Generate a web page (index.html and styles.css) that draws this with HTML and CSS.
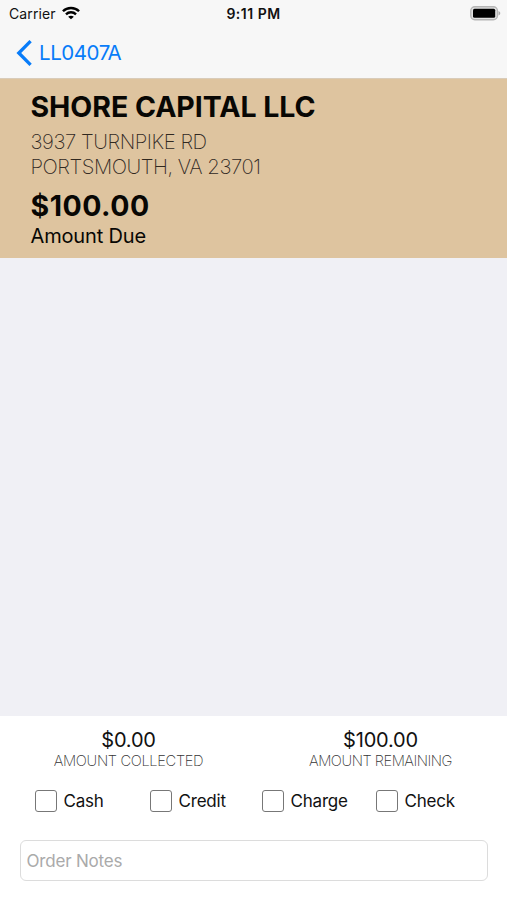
FILE: index.html
```html
<!DOCTYPE html>
<html lang="en">
<head>
<meta charset="utf-8">
<title>LL0407A</title>
<link rel="stylesheet" href="styles.css">
</head>
<body>
<div class="screen">
  <header class="top">
    <div class="status">
      <div class="carrier"><span>Carrier</span>
        <svg class="wifi" width="18" height="14" viewBox="0 0 19 14" fill="none" stroke="#000" stroke-width="2.5"><path d="M1 5.200C5.500 .5 13.500 .5 18 5.200M4.200 8.400c2.900-2.900 7.700-2.900 10.600 0"/><path d="M9.500 13.700 6.500 10.900c1.600-1.500 4.400-1.500 6 0z" fill="#000" stroke="none"/></svg>
      </div>
      <span class="time">9:11 PM</span>
      <svg class="battery" width="31" height="15" viewBox="0 0 31 15"><rect x=".8" y=".8" width="26.600" height="13" rx="4" fill="#e2e2e2" stroke="#b5b5b5" stroke-width="1.400"/><rect x="3" y="2.800" width="22.200" height="9" rx="1.500" fill="#000"/><path d="M28.500 5v4.500c2.300-.8 2.300-3.700 0-4.500z" fill="#aaa"/></svg>
    </div>
    <nav class="nav">
      <svg width="16" height="26" viewBox="0 0 16 26" fill="none" stroke="#087cf9" stroke-width="3.300"><path d="M14.600 1.200 2.800 13l11.800 11.800"/></svg>
      <span class="back">LL0407A</span>
    </nav>
  </header>
  <section class="account">
    <h1 class="name">SHORE CAPITAL LLC</h1>
    <p class="address">3937 TURNPIKE RD<br>PORTSMOUTH, VA 23701</p>
    <div class="due">$100.00</div>
    <div class="due-label">Amount Due</div>
  </section>
  <main class="content"></main>
  <footer class="payment">
    <div class="totals">
      <div class="total"><div class="value">$0.00</div><div class="caption">AMOUNT COLLECTED</div></div>
      <div class="total"><div class="value">$100.00</div><div class="caption remaining">AMOUNT REMAINING</div></div>
    </div>
    <div class="methods">
      <label class="method"><input type="checkbox">Cash</label>
      <label class="method"><input type="checkbox">Credit</label>
      <label class="method"><input type="checkbox">Charge</label>
      <label class="method"><input type="checkbox">Check</label>
    </div>
    <input class="notes" type="text" placeholder="Order Notes">
  </footer>
</div>
</body>
</html>
```
FILE: styles.css
```css
* { box-sizing: border-box; }
body { margin: 0; font-family: Inter, "Liberation Sans", sans-serif; color: #111; }
.screen { width: 507px; height: 900px; display: flex; flex-direction: column; background: #f0f0f5; overflow: hidden; white-space: nowrap; }
.top { height: 79px; background: #f7f7f7; border-bottom: 1px solid #d9ccba; }
.status { height: 27px; padding: 0 6px; display: grid; grid-template-columns: 1fr auto 1fr; align-items: center; font-size: 14px; }
.carrier { display: flex; align-items: center; gap: 6px; padding-left: 3px; letter-spacing: 0.1px; }
.time { font-weight: 600; font-size: 14px; letter-spacing: 0.5px; }
.wifi { margin-top: -2px; }
.battery { justify-self: end; }
.nav { height: 51px; padding-left: 16px; display: flex; align-items: center; gap: 7px; }
.back { font-size: 20.5px; letter-spacing: -0.45px; color: #087cf9; }
.account { height: 179px; padding: 11px 30px 0 30.5px; background: #dec49f; color: #080704; }
.name { margin: 0; font-size: 28.5px; line-height: 34px; font-weight: 700; letter-spacing: -0.05px; }
.address { margin: 5px 0 0; font-size: 20.3px; line-height: 25px; font-weight: 200; letter-spacing: -0.47px; color: #30281f; }
.due { margin-top: 10px; font-size: 28.5px; line-height: 34px; font-weight: 700; letter-spacing: 0.5px; }
.due-label { margin-top: 1px; font-size: 20px; line-height: 25px; letter-spacing: -0.15px; }
.content { flex: 1; }
.payment { height: 184px; background: #fff; padding: 12px 20px 0; }
.totals { display: grid; grid-template-columns: 257px 247px; margin: 0 -20px; text-align: center; }
.value { font-size: 20px; line-height: 24px; letter-spacing: -0.2px; }
.caption { font-size: 14.7px; line-height: 18px; font-weight: 200; letter-spacing: -0.35px; color: #333; }
.remaining { letter-spacing: -0.48px; }
.methods { display: grid; grid-template-columns: 115px 112px 114px 1fr; padding-left: 15px; margin-top: 20px; height: 22px; }
.method { display: flex; align-items: center; gap: 6.5px; font-size: 17px; letter-spacing: -0.2px; }
.method input { appearance: none; margin: 0; width: 22px; height: 22px; border: 1.5px solid #777; border-radius: 3px; background: #fff; }
.notes { display: block; width: 468px; height: 41px; margin-top: 28px; padding: 0 5.5px; border: 1.5px solid #dcdcdc; border-radius: 6px; background: #fff; font: 17px Inter, "Liberation Sans", sans-serif; letter-spacing: -0.2px; outline: none; }
.notes::placeholder { color: #aaa; opacity: 1; }
```
